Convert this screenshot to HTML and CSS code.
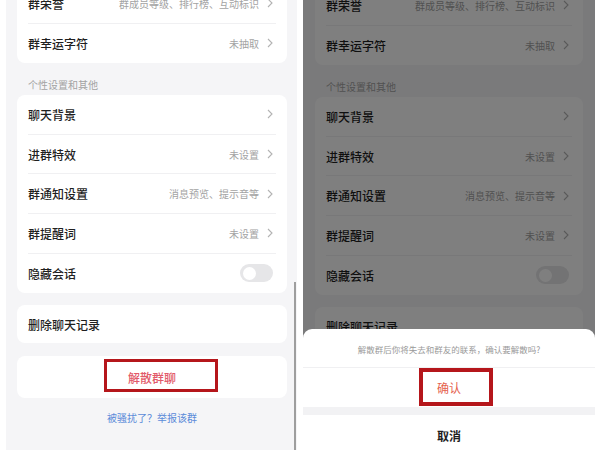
FILE: index.html
```html
<!DOCTYPE html>
<html lang="zh-CN">
  <head>
    <meta charset="UTF-8" />
    <meta name="viewport" content="width=device-width, initial-scale=1.0" />
    <title>群聊设置</title>
    <link rel="stylesheet" href="styles.css">
  </head>
  <body>
    <div class="screens">
      <!-- Settings screen -->
      <div class="phone">
        <div class="settings">
          <div class="card card-top">
            <div class="row">
              <span class="label">群荣誉</span>
              <span class="value">群成员等级、排行榜、互动标识</span>
              <svg class="chevron" viewBox="0 0 6 10"><polyline points="1,1 5,5 1,9" /></svg>
            </div>
            <div class="row">
              <span class="label">群幸运字符</span>
              <span class="value">未抽取</span>
              <svg class="chevron" viewBox="0 0 6 10"><polyline points="1,1 5,5 1,9" /></svg>
            </div>
          </div>

          <div class="section-title">个性设置和其他</div>
          <div class="card">
            <div class="row">
              <span class="label">聊天背景</span>
              <span class="value"></span>
              <svg class="chevron" viewBox="0 0 6 10"><polyline points="1,1 5,5 1,9" /></svg>
            </div>
            <div class="row">
              <span class="label">进群特效</span>
              <span class="value">未设置</span>
              <svg class="chevron" viewBox="0 0 6 10"><polyline points="1,1 5,5 1,9" /></svg>
            </div>
            <div class="row">
              <span class="label">群通知设置</span>
              <span class="value">消息预览、提示音等</span>
              <svg class="chevron" viewBox="0 0 6 10"><polyline points="1,1 5,5 1,9" /></svg>
            </div>
            <div class="row">
              <span class="label">群提醒词</span>
              <span class="value">未设置</span>
              <svg class="chevron" viewBox="0 0 6 10"><polyline points="1,1 5,5 1,9" /></svg>
            </div>
            <div class="row">
              <span class="label">隐藏会话</span>
              <span class="switch"></span>
            </div>
          </div>

          <div class="card card-single">
            <div class="row">
              <span class="label">删除聊天记录</span>
            </div>
          </div>

          <div class="card card-danger">
            <span class="danger-text">解散群聊</span>
            <span class="highlight highlight-dismiss"></span>
          </div>

          <a class="report-link" href="#">被骚扰了？举报该群</a>
        </div>
        <div class="scrollbar"></div>
      </div>

      <!-- Same screen with the confirm sheet open -->
      <div class="phone phone-dimmed">
        <div class="settings">
          <div class="card card-top">
            <div class="row">
              <span class="label">群荣誉</span>
              <span class="value">群成员等级、排行榜、互动标识</span>
              <svg class="chevron" viewBox="0 0 6 10"><polyline points="1,1 5,5 1,9" /></svg>
            </div>
            <div class="row">
              <span class="label">群幸运字符</span>
              <span class="value">未抽取</span>
              <svg class="chevron" viewBox="0 0 6 10"><polyline points="1,1 5,5 1,9" /></svg>
            </div>
          </div>

          <div class="section-title">个性设置和其他</div>
          <div class="card">
            <div class="row">
              <span class="label">聊天背景</span>
              <span class="value"></span>
              <svg class="chevron" viewBox="0 0 6 10"><polyline points="1,1 5,5 1,9" /></svg>
            </div>
            <div class="row">
              <span class="label">进群特效</span>
              <span class="value">未设置</span>
              <svg class="chevron" viewBox="0 0 6 10"><polyline points="1,1 5,5 1,9" /></svg>
            </div>
            <div class="row">
              <span class="label">群通知设置</span>
              <span class="value">消息预览、提示音等</span>
              <svg class="chevron" viewBox="0 0 6 10"><polyline points="1,1 5,5 1,9" /></svg>
            </div>
            <div class="row">
              <span class="label">群提醒词</span>
              <span class="value">未设置</span>
              <svg class="chevron" viewBox="0 0 6 10"><polyline points="1,1 5,5 1,9" /></svg>
            </div>
            <div class="row">
              <span class="label">隐藏会话</span>
              <span class="switch"></span>
            </div>
          </div>

          <div class="card card-single">
            <div class="row">
              <span class="label">删除聊天记录</span>
            </div>
          </div>
        </div>

        <div class="mask"></div>

        <div class="sheet">
          <div class="sheet-message">解散群后你将失去和群友的联系，确认要解散吗?</div>
          <div class="sheet-action sheet-confirm">
            确认
            <span class="highlight highlight-confirm"></span>
          </div>
          <div class="sheet-gap"></div>
          <div class="sheet-action sheet-cancel">取消</div>
        </div>
      </div>
    </div>
  </body>
</html>
```

FILE: styles.css
```css
/* General Styles */
body {
  font-family: "Noto Sans CJK SC", "Noto Sans", sans-serif;
  margin: 0;
  padding: 0;
  background-color: #fff;
  color: #1f1f1f;
}

.screens {
  display: flex;
  gap: 6px;
  padding-left: 6px;
  height: 450px;
}

/* Phone screen */
.phone {
  position: relative;
  width: 291px;
  height: 450px;
  overflow: hidden;
  background-color: #f5f5f7;
}

.phone-dimmed {
  width: 292px;
}

.settings {
  display: flex;
  flex-direction: column;
  padding: 0 10px 0 11px;
}

.phone-dimmed .settings {
  padding: 2px 12px 0 12px;
}

/* Cards */
.card {
  background-color: #fff;
  border-radius: 8px;
  padding: 0 11px;
}

.card-top {
  margin-top: -16px;
}

.card-single {
  margin-top: 12px;
}

.row {
  display: flex;
  align-items: center;
  height: 39.6px;
  box-sizing: border-box;
  padding-right: 3px;
  border-bottom: 1px solid #f0f0f2;
}

.card .row:last-child {
  border-bottom: none;
}

.card-single .row {
  height: 38px;
}

.label {
  flex: 1;
  font-size: 12px;
  font-weight: 500;
  color: #1f1f1f;
}

.value {
  font-size: 10px;
  color: #a3a3a3;
  margin-right: 8px;
}

.chevron {
  width: 6px;
  height: 10px;
  fill: none;
  stroke: #b3b3b3;
  stroke-width: 1.1;
}

/* Toggle switch */
.switch {
  position: relative;
  width: 33px;
  height: 18px;
  border-radius: 9px;
  background-color: #e6e6e8;
}

.switch::after {
  content: "";
  position: absolute;
  left: 3px;
  top: 2.5px;
  width: 13px;
  height: 13px;
  border-radius: 50%;
  background-color: #fff;
}

.section-title {
  height: 32px;
  box-sizing: border-box;
  padding: 15px 0 0 11px;
  font-size: 10px;
  line-height: 14px;
  color: #a3a3a3;
}

/* Dismiss group */
.card-danger {
  position: relative;
  margin-top: 13px;
  height: 42px;
  display: flex;
  align-items: center;
  justify-content: center;
}

.danger-text {
  font-size: 12px;
  color: #e25a6a;
  font-weight: 500;
}

.report-link {
  margin-top: 13px;
  text-align: center;
  font-size: 10px;
  line-height: 14px;
  color: #5b8bd9;
  text-decoration: none;
}

/* Red annotation boxes */
.highlight {
  position: absolute;
  border: 3px solid #b5161b;
  box-sizing: border-box;
}

.highlight-dismiss {
  left: 87px;
  top: 3px;
  width: 114px;
  height: 33px;
}

.highlight-confirm {
  left: 116px;
  top: 0;
  width: 74px;
  height: 38px;
  border-width: 4px;
}

.scrollbar {
  position: absolute;
  right: 1px;
  top: 282px;
  bottom: 0;
  width: 2px;
  background-color: #9e9e9e;
}

/* Dim mask and action sheet */
.mask {
  position: absolute;
  inset: 0;
  background-color: rgba(0, 0, 0, 0.5);
}

.sheet {
  position: absolute;
  left: 0;
  right: 0;
  bottom: -5px;
  background-color: #fff;
  border-radius: 9px 9px 0 0;
}

.sheet-message {
  height: 39px;
  box-sizing: border-box;
  padding-top: 13px;
  text-align: center;
  font-size: 8.5px;
  line-height: 14px;
  color: #9a9a9a;
  border-bottom: 1px solid #f0f0f2;
}

.sheet-action {
  height: 40px;
  display: flex;
  align-items: center;
  justify-content: center;
  font-size: 12px;
}

.sheet-confirm {
  position: relative;
  height: 39px;
  color: #e5624e;
}

.sheet-gap {
  height: 8px;
  background-color: #f2f2f4;
}

.sheet-cancel {
  font-weight: 700;
  color: #1f1f1f;
}
```
